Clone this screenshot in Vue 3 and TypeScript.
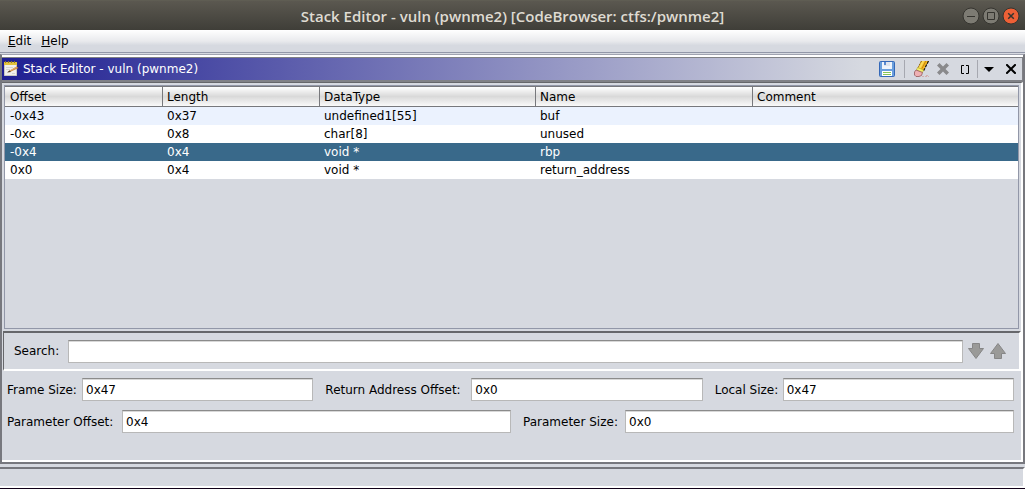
<script setup lang="ts">
import { ref } from 'vue'

interface Row { offset: string; length: string; type: string; name: string; comment: string }

const columns: string[] = ['Offset', 'Length', 'DataType', 'Name', 'Comment']
const rows: Row[] = [
  { offset: '-0x43', length: '0x37', type: 'undefined1[55]', name: 'buf', comment: '' },
  { offset: '-0xc', length: '0x8', type: 'char[8]', name: 'unused', comment: '' },
  { offset: '-0x4', length: '0x4', type: 'void *', name: 'rbp', comment: '' },
  { offset: '0x0', length: '0x4', type: 'void *', name: 'return_address', comment: '' },
]
const selected = ref(2)
const search = ref('')
const frameSize = ref('0x47')
const returnOffset = ref('0x0')
const localSize = ref('0x47')
const paramOffset = ref('0x4')
const paramSize = ref('0x0')
</script>

<template>
  <div class="window">
    <header class="titlebar">
      <h1>Stack Editor - vuln (pwnme2) [CodeBrowser: ctfs:/pwnme2]</h1>
      <div class="controls">
        <button type="button" aria-label="Minimize">
          <svg viewBox="0 0 18 18"><circle class="disc" cx="9" cy="9" r="8" /><path class="mark" d="M5 9.5h8" /></svg>
        </button>
        <button type="button" aria-label="Maximize">
          <svg viewBox="0 0 18 18"><circle class="disc" cx="9" cy="9" r="8" /><path class="mark" d="M5.5 5.5h7v7h-7z" /></svg>
        </button>
        <button type="button" aria-label="Close">
          <svg viewBox="0 0 18 18"><circle class="disc close" cx="9" cy="9" r="8" /><path class="mark thick" d="M6.200 6.200l5.600 5.600M11.800 6.200l-5.600 5.600" /></svg>
        </button>
      </div>
    </header>

    <nav class="menubar">
      <button type="button"><u>E</u>dit</button>
      <button type="button"><u>H</u>elp</button>
    </nav>

    <main class="frame">
      <div class="panel-title">
        <svg class="app-icon" viewBox="0 0 16 16" aria-hidden="true">
          <path d="M1 2h13v12.500H1z" fill="#f1f0ec" />
          <path d="M1.500 4v10.500h12V4" fill="none" stroke="#c9c8c2" />
          <path d="M1 1h13v3H1z" fill="#e3c23c" />
          <path d="M2.500 0v2M5.500 0v2M8.500 0v2M11.500 0v2" stroke="#8e7a2c" />
          <path d="M3 6.500h7M3 8.500h4M9 12.500h3" stroke="#d6d5d0" />
          <path d="M5 10.500L13.500 5.500l2 1.500L7 11z" fill="#cf8a3e" />
          <path d="M5 11l9-5" stroke="#e8b878" stroke-width=".7" />
          <path d="M4 11.500l2.500-2 1.500 1.500z" fill="#4a3c30" />
        </svg>
        <h2>Stack Editor - vuln (pwnme2)</h2>
        <div class="tools">
          <button type="button" class="save" aria-label="Save">
            <svg viewBox="0 0 16 16">
              <rect x=".5" y=".5" width="15" height="15" rx="1" fill="#6a9fdd" stroke="#3468b8" />
              <path d="M3 1h10v7H3z" fill="#eef4fc" />
              <path d="M5 1h6v4H5z" fill="#dfe5ee" /><path d="M5 1h2v3H5z" fill="#5b8bd0" />
              <path d="M3 10h10v5H3z" fill="#fff" />
              <path d="M4 11.500h8M4 13.500h8" stroke="#86c557" />
            </svg>
          </button>
          <i class="sep"></i>
          <button type="button" class="clear" aria-label="Clear">
            <svg viewBox="0 0 16 16">
              <path d="M7 0h7.500L9 10 3.500 8z" fill="#f5b81f" />
              <path d="M8 0h2.500L6.500 7.500 4.500 7z" fill="#fbdc5c" />
              <path d="M11.800 0L8 7.500" stroke="#b97d10" stroke-width=".8" />
              <path d="M7.500 0L4 6.500" stroke="#6b4b0c" stroke-width=".8" stroke-dasharray="2 1" />
              <path d="M14.500 0L9.500 10" stroke="#1a1405" stroke-width="1.200" stroke-dasharray="3 1" />
              <path d="M3.500 6.500L9.500 9 8.500 11.500 2.500 9z" fill="#f4f06a" stroke="#a89a28" stroke-width=".5" />
              <path d="M2 9l6.500 2.500-1 3-2.500 1H2L.5 14v-3z" fill="#eeb0b3" stroke="#94595b" stroke-width=".8" />
              <path d="M8 15.500h7M12 14.500h2" stroke="#d4aeb0" stroke-dasharray="2 1" />
            </svg>
          </button>
          <button type="button" class="delete" aria-label="Delete">
            <svg viewBox="0 0 12 12"><path d="M0 2.500L2.500 0 6 3.500 9.500 0 12 2.500 8.500 6 12 9.500 9.500 12 6 8.500 2.500 12 0 9.500 3.500 6z" fill="#8a8a8c" /></svg>
          </button>
          <button type="button" class="brackets" aria-label="Array">
            <svg viewBox="0 0 8 9"><path d="M3 .5H.5v8H3M5 .5h2.500v8H5" fill="none" stroke="#000" /></svg>
          </button>
          <i class="sep"></i>
          <button type="button" class="drop" aria-label="Menu">
            <svg viewBox="0 0 10 5"><path d="M0 0h10L5 5z" fill="#000" /></svg>
          </button>
          <button type="button" class="shut" aria-label="Close panel">
            <svg viewBox="0 0 10 10"><path d="M1 1l8 8M9 1L1 9" stroke="#000" stroke-width="2" stroke-linecap="square" /></svg>
          </button>
        </div>
      </div>

      <section class="body">
        <div class="table-wrap">
          <table>
            <colgroup><col class="c1"><col class="c2"><col class="c3"><col class="c4"><col></colgroup>
            <thead><tr><th v-for="c in columns" :key="c" scope="col">{{ c }}</th></tr></thead>
            <tbody>
              <tr v-for="(r, i) in rows" :key="r.offset" :class="{ selected: i === selected }" @click="selected = i">
                <td>{{ r.offset }}</td><td>{{ r.length }}</td><td>{{ r.type }}</td><td>{{ r.name }}</td><td>{{ r.comment }}</td>
              </tr>
            </tbody>
          </table>
        </div>

        <div class="search">
          <label for="search">Search:</label>
          <input id="search" v-model="search" type="text">
          <button type="button" aria-label="Next match">
            <svg viewBox="0 0 16 16"><path d="M4.500 .5h7v5h4L8 15.500 .5 5.500h4z" fill="#9a9a98" stroke="#868686" /></svg>
          </button>
          <button type="button" aria-label="Previous match">
            <svg viewBox="0 0 16 16"><path d="M4.500 15.500h7v-5h4L8 .5 .5 10.500h4z" fill="#9a9a98" stroke="#868686" /></svg>
          </button>
        </div>

        <form class="details" @submit.prevent>
          <div class="line">
            <div class="field"><label class="l-frame" for="frame">Frame Size:</label><input id="frame" v-model="frameSize" type="text"></div>
            <div class="field"><label class="l-return" for="ret">Return Address Offset:</label><input id="ret" v-model="returnOffset" type="text"></div>
            <div class="field"><label class="l-local" for="local">Local Size:</label><input id="local" v-model="localSize" type="text"></div>
          </div>
          <div class="line">
            <div class="field"><label class="l-poffset" for="poff">Parameter Offset:</label><input id="poff" v-model="paramOffset" type="text"></div>
            <div class="field"><label class="l-psize" for="psize">Parameter Size:</label><input id="psize" v-model="paramSize" type="text"></div>
          </div>
        </form>
      </section>
    </main>

    <footer class="status"></footer>
  </div>
</template>

<style>
body { background: #d6d9e0; }
</style>

<style scoped>
* { box-sizing: border-box; }
.window {
  display: flex; flex-direction: column; min-height: 100vh;
  background: #d6d9e0; color: #000; border-bottom: 1px solid #100018;
  font: 12px/18px "DejaVu Sans", sans-serif;
}
button { padding: 0; border: 0; background: none; font: inherit; color: inherit; display: flex; }
svg { display: block; width: 100%; height: 100%; }
h1, h2 { margin: 0; font-weight: normal; font-size: 12px; }

.titlebar {
  display: grid; grid-template-columns: 1fr auto 1fr; align-items: center; height: 30px;
  background: linear-gradient(#5b5850, #3f3e38); border-top: 1px solid #5f5d53;
}
.titlebar h1 {
  grid-column: 2; color: #dfdbd2; font: 600 15px/20px "Open Sans", "Noto Sans", sans-serif;
}
.controls { justify-self: end; display: flex; gap: 2px; padding-right: 5px; }
.controls button { width: 18px; height: 18px; }
.disc { fill: #7d7b73; stroke: #35342f; }
.disc.close { fill: #ee6036; }
.mark { fill: none; stroke: #35342f; }
.mark.thick { stroke-width: 1.500; }

.menubar {
  display: flex; gap: 10px; height: 23px; padding-left: 8px; align-items: center;
  background: linear-gradient(#fff, #e9eaed 50%, #d6d9e0 70%); border-bottom: 1px solid #9297a8;
}
.frame {
  flex: 1; display: flex; flex-direction: column; margin-top: 1px; background: #fff;
  border: solid; border-width: 1px 2px 2px 2px; border-color: #a0a3b0 #77787e #77787e #77787e;
}
.panel-title {
  display: flex; align-items: center; height: 25px; padding: 0 6px 0 1px; margin-top: 2px;
  border: solid #808186; border-width: 1px 1px 2px 0;
  background: linear-gradient(to right, #1f1f92, #d6d9e0 860px);
}
.app-icon { width: 16px; height: 16px; }
.panel-title h2 { color: #fff; margin-left: 4px; }
.tools { margin-left: auto; display: flex; align-items: center; }
.sep { width: 1px; height: 18px; background: #a6a8b0; }
.save, .clear { width: 16px; height: 16px; }
.save { margin-right: 9px; }
.clear { margin-left: 9px; }
.delete { width: 12px; height: 12px; margin-left: 7px; }
.brackets { width: 8px; height: 9px; margin: 0 8px 0 12px; }
.drop { width: 10px; height: 5px; margin: 0 12px 0 6px; }
.shut { width: 10px; height: 10px; }

.body {
  flex: 1; display: flex; flex-direction: column; background: #d6d9e0;
  border: solid; border-width: 1px 2px 2px 0; border-color: #66676b #fff #fff;
}
.table-wrap { flex: 1; margin: 2px; border: 1px solid #9297a8; }
table { width: 100%; border-collapse: separate; border-spacing: 0; table-layout: fixed; }
.c1 { width: 158px; } .c2 { width: 157px; } .c3 { width: 216px; } .c4 { width: 217px; }
th {
  height: 21px; padding: 0 4px; text-align: left; font-weight: normal;
  background: linear-gradient(#fff, #d9d9d9 50%, #fafafa);
  border: solid #77787c; border-width: 1px 1px 1px 0;
}
th:last-child { border-right: 0; }
td { height: 18px; padding: 0 4px; background: #fff; white-space: pre; }
th:first-child, td:first-child { padding-left: 5px; }
tbody tr:first-child td { background: #ebf2fe; }
tbody tr.selected td { background: #39698a; color: #fff; }

input {
  flex: 1; min-width: 0; height: 23px; padding: 0 3px; font: inherit; color: #000; background: #fff;
  border: 1px solid #b8b8b8; border-top-color: #8b8b8b; box-shadow: inset 0 1px #d8d8d8; outline: 0;
}
.search {
  display: flex; align-items: center; height: 40px; padding: 0 13px 0 10px; margin-left: 1px;
  border: solid; border-width: 2px 2px 2px 1px; border-color: #66676b #fff #fff #66676b;
}
.search label { margin-right: 9px; }
.search button { width: 16px; height: 16px; margin-left: 5px; }
.search button + button { margin-left: 6px; }
.details { height: 89px; padding: 7px 7px 0 5px; display: flex; flex-direction: column; gap: 9px; }
.line { display: flex; gap: 12px; }
.field { flex: 1 1 auto; display: flex; align-items: center; gap: 4px; }
.field label { flex: none; white-space: nowrap; }
.field input { width: 0; }
.l-frame { width: 71px; }
.l-return { width: 142px; }
.l-local { width: 64px; }
.l-poffset { width: 111px; }
.l-psize { width: 98px; }

.status {
  height: 21px; margin-top: 3px; border: solid; border-width: 2px 2px 2px 0; border-color: #77787e #fff #fff;
}
</style>
